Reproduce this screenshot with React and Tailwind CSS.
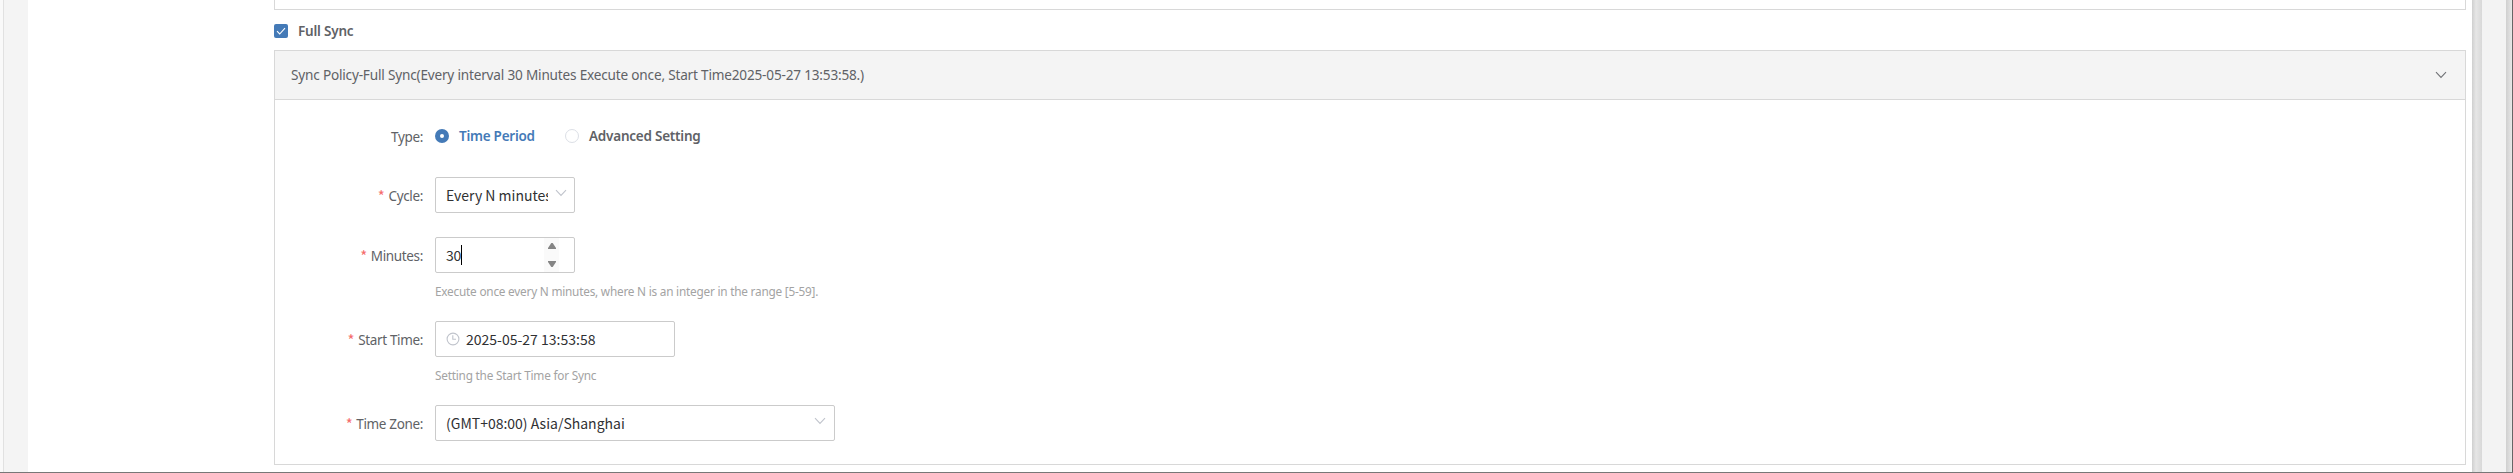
import React from "react";

const Chevron = ({ className }) => (
  <svg viewBox="0 0 12 8" className={className} fill="none" stroke="currentColor" strokeWidth="1.1">
    <path d="M1 1.2 6 6.4 11 1.2" />
  </svg>
);

const Row = ({ label, required = true, children, className = "" }) => (
  <div className={`flex h-9 items-center ${className}`}>
    <div className="mr-3 flex w-[148px] shrink-0 items-center justify-end gap-[4px] whitespace-nowrap pt-[2px] font-['Noto_Sans',sans-serif] text-[13.5px] tracking-[-0.35px] text-[#606266]">
      {required && <span className="font-['Noto_Sans_CJK_SC',sans-serif] text-[15px] leading-5 text-[#f56c6c]">*</span>}
      <span>{label}</span>
    </div>
    {children}
  </div>
);

const box = "flex h-9 shrink-0 items-center rounded-[2px] border border-[#cbcbcb] bg-white pl-2.5 text-sm text-[#303133]";

export default function App() {
  return (
    <div className="flex h-[473px] w-[2513px] flex-col overflow-hidden bg-white font-['Noto_Sans_CJK_SC','Noto_Sans',sans-serif]">
      <div className="flex h-[472px] w-full">
        <div className="w-[3px] shrink-0 bg-[#f9f9f9]" />
        <div className="w-px shrink-0 bg-[#e1e1e1]" />
        <div className="w-6 shrink-0 bg-[#f4f4f4]" />

        <main className="flex min-w-0 flex-1 flex-col pl-[246px] pr-[6px]">
          <div className="h-[10px] shrink-0 border border-t-0 border-[#d8d8d8]" />

          <div className="flex h-10 shrink-0 items-center">
            <span className="mt-[2px] flex h-[14px] w-[14px] items-center justify-center rounded-[2px] bg-[#447ab7]">
              <svg viewBox="0 0 14 14" className="h-[14px] w-[14px]" fill="none" stroke="white" strokeWidth="1.1">
                <path d="M3 7.2 5.7 10 11 4.2" />
              </svg>
            </span>
            <span className="ml-[10px] pt-[2px] font-['Noto_Sans',sans-serif] text-[13.5px] font-semibold tracking-[-0.2px] text-[#606266]">Full Sync</span>
          </div>

          <section className="flex h-[415px] shrink-0 flex-col border border-[#d8d8d8]">
            <header className="flex h-[49px] shrink-0 items-center justify-between border-b border-[#d8d8d8] bg-[#f4f4f4] pl-4 pr-[18px]">
              <span className="pt-px font-['Noto_Sans',sans-serif] text-[13.6px] tracking-[-0.19px] text-[#606266]">
                Sync Policy-Full Sync(Every interval 30 Minutes Execute once, Start Time2025-05-27 13:53:58.)
              </span>
              <Chevron className="h-2 w-3 text-[#707276]" />
            </header>

            <div className="flex flex-col pt-[18px]">
              <Row label="Type:" required={false}>
                <span className="flex h-[14px] w-[14px] items-center justify-center rounded-full bg-[#447ab7]">
                  <span className="h-1 w-1 rounded-full bg-white" />
                </span>
                <span className="ml-[10px] w-[76px] whitespace-nowrap pt-px font-['Noto_Sans',sans-serif] text-[13.5px] font-semibold tracking-[-0.25px] text-[#447ab7]">Time Period</span>
                <span className="ml-[30px] h-[14px] w-[14px] rounded-full border border-[#dcdfe6] bg-white" />
                <span className="ml-[10px] whitespace-nowrap pt-px font-['Noto_Sans',sans-serif] text-[13.5px] font-semibold tracking-[-0.23px] text-[#606266]">Advanced Setting</span>
              </Row>

              <Row label="Cycle:" className="mt-[23px]">
                <div className={`${box} w-[140px]`}>
                  <span className="w-[102px] overflow-hidden whitespace-nowrap">Every N minutes</span>
                  <Chevron className="mb-1 ml-[7px] h-2 w-3 text-[#c0c4cc]" />
                </div>
              </Row>

              <Row label="Minutes:" className="mt-6">
                <div className={`${box} w-[140px]`}>
                  <span className="tracking-[-0.2px]">30</span>
                  <span className="h-5 w-px bg-black" />
                  <span className="ml-[82px] flex h-[34px] w-[15px] flex-col items-center justify-between bg-[#fafafa] py-[5px]">
                    <svg viewBox="0 0 8 6" className="h-[6px] w-2" fill="#858585"><path d="M0 6V5L3.3 0H4.7L8 5V6Z" /></svg>
                    <svg viewBox="0 0 8 6" className="h-[6px] w-2" fill="#858585"><path d="M0 0V1L3.3 6H4.7L8 1V0Z" /></svg>
                  </span>
                </div>
              </Row>
              <p className="ml-[160px] flex h-9 items-center whitespace-nowrap pt-px font-['Noto_Sans',sans-serif] text-[11.8px] tracking-[-0.22px] text-[#a3a3a3]">
                Execute once every N minutes, where N is an integer in the range [5-59].
              </p>

              <Row label="Start Time:" className="mt-3">
                <div className={`${box} w-[240px]`}>
                  <svg viewBox="0 0 14 14" className="h-[14px] w-[14px]" fill="none" stroke="#c0c4cc" strokeWidth="1.1">
                    <circle cx="7" cy="7" r="5.9" />
                    <path d="M6.8 3.2V7.3H10" />
                  </svg>
                  <span className="ml-[6px]">2025-05-27 13:53:58</span>
                </div>
              </Row>
              <p className="ml-[160px] flex h-9 items-center pt-px font-['Noto_Sans',sans-serif] text-[11.8px] tracking-[-0.22px] text-[#a3a3a3]">Setting the Start Time for Sync</p>

              <Row label="Time Zone:" className="mt-3">
                <div className={`${box} w-[400px] justify-between pr-2`}>
                  <span>(GMT+08:00) Asia/Shanghai</span>
                  <Chevron className="mb-1 h-2 w-3 text-[#c0c4cc]" />
                </div>
              </Row>
            </div>
          </section>
        </main>

        <div className="w-[10px] shrink-0 bg-linear-to-r from-[#cfcfcf] via-[#e6e6e6] via-40% to-[#d8d8d8]" />
        <div className="w-6 shrink-0 bg-[#f3f3f3]" />
        <div className="w-[6px] shrink-0 bg-linear-to-r from-[#cfcfcf] to-[#e8e8e8]" />
        <div className="w-px shrink-0 bg-[#666666]" />
      </div>
      <div className="h-px w-full shrink-0 bg-[#777777]" />
    </div>
  );
}
